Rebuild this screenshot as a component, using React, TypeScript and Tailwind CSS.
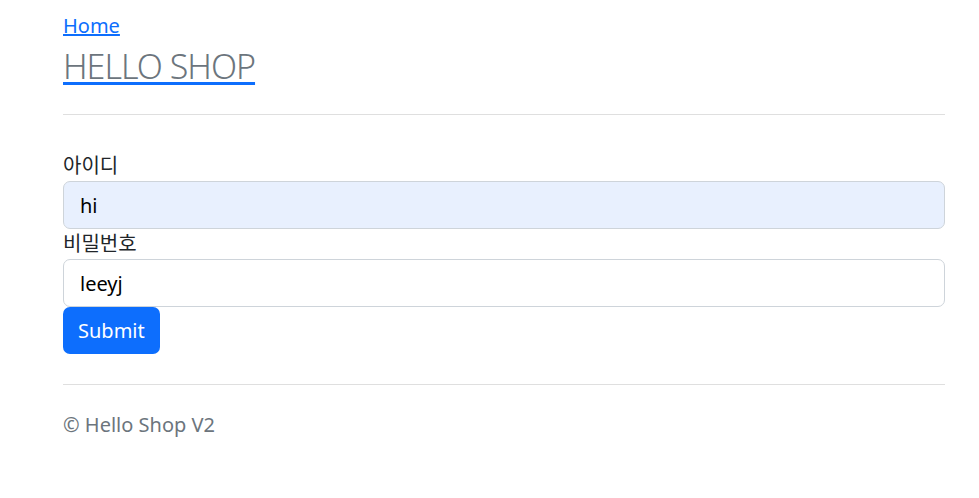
export default function App() {
  return (
    <div className="min-h-[498px] bg-white font-['Noto_Sans','Noto_Sans_CJK_KR',sans-serif] text-[20px] leading-[1.5] text-[#212529]">
      <div className="ml-[63px] w-[882px] pt-[11px]">
        <header>
          <a href="#" className="text-[#0d6efd] underline">
            Home
          </a>
          <h1 className="mt-[3px] text-[34px] font-light leading-[44px] tracking-[-1px]">
            <a
              href="#"
              className="text-[#6c757d] underline decoration-[#0d6efd] decoration-[3px] underline-offset-[3px]">
              HELLO SHOP
            </a>
          </h1>
        </header>
        <hr className="mt-[26px] border-t border-[#dfdfdf]" />
        <form className="mt-[36px]">
          <label htmlFor="userId" className="block">
            아이디
          </label>
          <input
            id="userId"
            name="userId"
            defaultValue="hi"
            className="block h-[48px] w-full rounded-[7px] border border-[#ced4da] bg-[#e8f0fe] px-4 text-[20px] text-black outline-none"
          />
          <label htmlFor="password" className="block">
            비밀번호
          </label>
          <input
            id="password"
            name="password"
            defaultValue="leeyj"
            className="block h-[48px] w-full rounded-[7px] border border-[#ced4da] bg-white px-4 text-[20px] text-black outline-none"
          />
          <button
            type="submit"
            className="block h-[47px] rounded-[7px] bg-[#0d6efd] px-[15px] text-[20px] text-white">
            Submit
          </button>
        </form>
        <hr className="mt-[30px] border-t border-[#dfdfdf]" />
        <footer className="mt-[25px] text-[#6c757d]">© Hello Shop V2</footer>
      </div>
    </div>
  );
}
